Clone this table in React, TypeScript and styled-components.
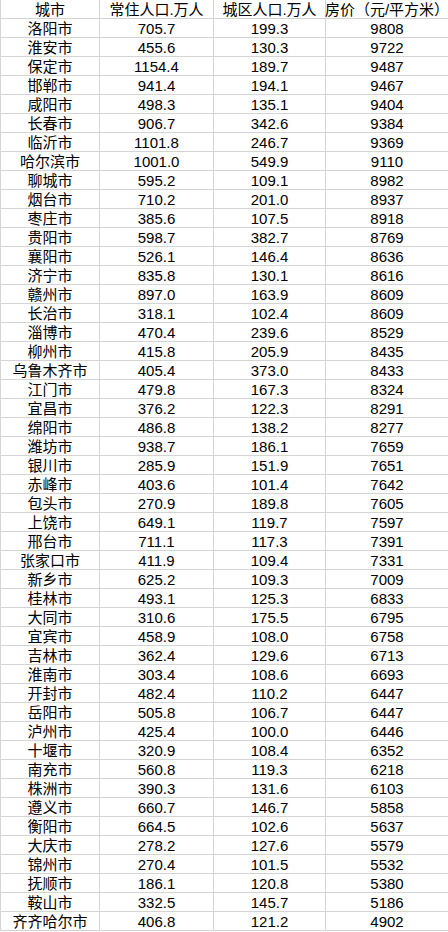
import React from "react";
import styled, { createGlobalStyle } from "styled-components";

const Global = createGlobalStyle`
  html, body { margin: 0; padding: 0; background: #ffffff; }
  body { font-family: "Liberation Sans", "Noto Sans CJK SC", sans-serif; }
`;

const data: [string, string, string, string][] = [
  ["洛阳市", "705.7", "199.3", "9808"],
  ["淮安市", "455.6", "130.3", "9722"],
  ["保定市", "1154.4", "189.7", "9487"],
  ["邯郸市", "941.4", "194.1", "9467"],
  ["咸阳市", "498.3", "135.1", "9404"],
  ["长春市", "906.7", "342.6", "9384"],
  ["临沂市", "1101.8", "246.7", "9369"],
  ["哈尔滨市", "1001.0", "549.9", "9110"],
  ["聊城市", "595.2", "109.1", "8982"],
  ["烟台市", "710.2", "201.0", "8937"],
  ["枣庄市", "385.6", "107.5", "8918"],
  ["贵阳市", "598.7", "382.7", "8769"],
  ["襄阳市", "526.1", "146.4", "8636"],
  ["济宁市", "835.8", "130.1", "8616"],
  ["赣州市", "897.0", "163.9", "8609"],
  ["长治市", "318.1", "102.4", "8609"],
  ["淄博市", "470.4", "239.6", "8529"],
  ["柳州市", "415.8", "205.9", "8435"],
  ["乌鲁木齐市", "405.4", "373.0", "8433"],
  ["江门市", "479.8", "167.3", "8324"],
  ["宜昌市", "376.2", "122.3", "8291"],
  ["绵阳市", "486.8", "138.2", "8277"],
  ["潍坊市", "938.7", "186.1", "7659"],
  ["银川市", "285.9", "151.9", "7651"],
  ["赤峰市", "403.6", "101.4", "7642"],
  ["包头市", "270.9", "189.8", "7605"],
  ["上饶市", "649.1", "119.7", "7597"],
  ["邢台市", "711.1", "117.3", "7391"],
  ["张家口市", "411.9", "109.4", "7331"],
  ["新乡市", "625.2", "109.3", "7009"],
  ["桂林市", "493.1", "125.3", "6833"],
  ["大同市", "310.6", "175.5", "6795"],
  ["宜宾市", "458.9", "108.0", "6758"],
  ["吉林市", "362.4", "129.6", "6713"],
  ["淮南市", "303.4", "108.6", "6693"],
  ["开封市", "482.4", "110.2", "6447"],
  ["岳阳市", "505.8", "106.7", "6447"],
  ["泸州市", "425.4", "100.0", "6446"],
  ["十堰市", "320.9", "108.4", "6352"],
  ["南充市", "560.8", "119.3", "6218"],
  ["株洲市", "390.3", "131.6", "6103"],
  ["遵义市", "660.7", "146.7", "5858"],
  ["衡阳市", "664.5", "102.6", "5637"],
  ["大庆市", "278.2", "127.6", "5579"],
  ["锦州市", "270.4", "101.5", "5532"],
  ["抚顺市", "186.1", "120.8", "5380"],
  ["鞍山市", "332.5", "145.7", "5186"],
  ["齐齐哈尔市", "406.8", "121.2", "4902"],
];

const Sheet = styled.div`
  display: grid;
  grid-template-columns: 99px 114px 112px 123px;
  width: 448px;
  box-sizing: border-box;
  border-left: 1px solid #d4d4d4;
`;

const Row = styled.div`
  display: contents;
`;

const Cell = styled.div<{ $head?: boolean }>`
  box-sizing: border-box;
  height: 19px;
  border-right: 1px solid #d4d4d4;
  border-bottom: 1px solid #d4d4d4;
  display: flex;
  align-items: center;
  justify-content: center;
  font-size: 15px;
  line-height: 18px;
  color: #000000;
  white-space: nowrap;
  overflow: visible;
  padding-top: 1px;
`;

export default function App() {
  return (
    <>
      <Global />
      <Sheet>
        <Row>
          <Cell $head>城市</Cell>
          <Cell $head>常住人口.万人</Cell>
          <Cell $head>城区人口.万人</Cell>
          <Cell $head>房价（元/平方米）</Cell>
        </Row>
        {data.map((r) => (
          <Row key={r[0]}>
            {r.map((v, i) => (
              <Cell key={i}>{v}</Cell>
            ))}
          </Row>
        ))}
      </Sheet>
    </>
  );
}
